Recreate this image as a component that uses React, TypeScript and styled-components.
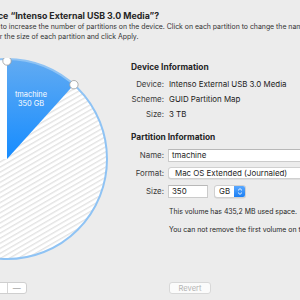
import styled, { createGlobalStyle } from 'styled-components';

const GlobalStyle = createGlobalStyle`
  html, body {
    margin: 0;
    padding: 0;
    background: #ececec;
  }
  #root {
    width: 300px;
    height: 300px;
    overflow: hidden;
  }
`;

const Window = styled.div`
  width: 420px;
  height: 300px;
  margin-left: -100px;
  padding-top: 10px;
  box-sizing: border-box;
  background: #ececec;
  font-family: Inter, 'Liberation Sans', sans-serif;
  color: #262626;
`;

const Header = styled.div`
  padding-left: 41px;
  white-space: nowrap;
`;

const Title = styled.div`
  font-size: 8.8px;
  line-height: 11px;
  font-weight: 700;
`;

const Description = styled.div`
  margin-top: 1px;
  font-size: 6.9px;
  line-height: 9.5px;
  color: #333;
`;

const DescriptionLine = styled.div<{ $indent: number }>`
  padding-left: ${(p) => p.$indent}px;
`;

const Body = styled.div`
  display: flex;
  margin-top: 17px;
`;

const LeftColumn = styled.div`
  flex: 0 0 231px;
  padding-left: 6px;
  box-sizing: border-box;
  display: flex;
  flex-direction: column;
`;

const SegmentGroup = styled.div`
  display: flex;
  margin-top: 22px;
  margin-left: 81px;
  width: 40px;
  height: 12px;
  background: #fff;
  border: 1px solid #cfcfcf;
  border-radius: 3px;
  box-sizing: border-box;
`;

const Segment = styled.div<{ $divider?: boolean }>`
  flex: 1;
  display: flex;
  align-items: center;
  justify-content: center;
  font-size: 8px;
  color: #9a9a9a;
  border-left: ${(p) => (p.$divider ? '1px solid #d6d6d6' : 'none')};
`;

const RightColumn = styled.div`
  flex: 0 0 auto;
  padding-top: 4px;
  display: flex;
  flex-direction: column;
`;

const SectionTitle = styled.div<{ $gap?: number }>`
  font-size: 8.4px;
  line-height: 11px;
  font-weight: 700;
  color: #262626;
  margin-top: ${(p) => p.$gap ?? 0}px;
`;

const InfoGrid = styled.div`
  display: grid;
  grid-template-columns: 33px auto;
  column-gap: 5px;
  grid-auto-rows: 15px;
  margin-top: 3px;
  font-size: 7.9px;
  align-items: center;
  white-space: nowrap;
`;

const Label = styled.div`
  text-align: right;
  color: #3a3a3a;
`;

const Value = styled.div`
  color: #222;
`;

const FormGrid = styled.div`
  display: grid;
  grid-template-columns: 33px auto;
  column-gap: 4px;
  row-gap: 5px;
  grid-auto-rows: 13px;
  margin-top: 5.5px;
  font-size: 7.9px;
  align-items: center;
  white-space: nowrap;
`;

const TextField = styled.div<{ $width: number }>`
  width: ${(p) => p.$width}px;
  height: 13px;
  box-sizing: border-box;
  background: #fff;
  border: 1px solid #cbcbcb;
  border-top-color: #b8b8b8;
  padding-left: 3px;
  display: flex;
  align-items: center;
  color: #1e1e1e;
`;

const Popup = styled.div<{ $width: number }>`
  width: ${(p) => p.$width}px;
  height: 12.5px;
  box-sizing: border-box;
  background: #fff;
  border: 1px solid #d0d0d0;
  border-radius: 3px;
  box-shadow: 0 0.5px 0.5px rgba(0, 0, 0, 0.12);
  display: flex;
  align-items: center;
  padding-left: 6px;
  color: #1e1e1e;
  overflow: hidden;
`;

const SizeRow = styled.div`
  display: flex;
  align-items: center;
  gap: 6px;
`;

const UnitPopup = styled.div`
  width: 32px;
  height: 13px;
  box-sizing: border-box;
  background: #fff;
  border: 1px solid #d0d0d0;
  border-radius: 3px;
  box-shadow: 0 0.5px 0.5px rgba(0, 0, 0, 0.12);
  display: flex;
  align-items: center;
  overflow: hidden;
`;

const UnitText = styled.div`
  flex: 1;
  padding-left: 4px;
  color: #1e1e1e;
`;

const Stepper = styled.div`
  width: 11px;
  height: 100%;
  background: linear-gradient(#5aa8ff, #1a7ff4);
  display: flex;
  align-items: center;
  justify-content: center;
`;

const Note = styled.div<{ $gap: number }>`
  margin-top: ${(p) => p.$gap}px;
  margin-left: 38px;
  font-size: 6.9px;
  line-height: 9px;
  color: #262626;
  white-space: nowrap;
`;

const PushButton = styled.div`
  margin-top: 48px;
  margin-left: 38px;
  width: 42px;
  height: 12px;
  box-sizing: border-box;
  background: #fbfbfb;
  border: 1px solid #d8d8d8;
  border-radius: 3px;
  display: flex;
  align-items: center;
  justify-content: center;
  font-size: 7.6px;
  color: #b4b4b4;
`;

const polar = (deg: number, r = 100) => {
  const a = (deg * Math.PI) / 180;
  return [101 + r * Math.sin(a), 101 - r * Math.cos(a)];
};

const wedge = (from: number, to: number) => {
  const [x1, y1] = polar(from);
  const [x2, y2] = polar(to);
  const large = to - from > 180 ? 1 : 0;
  return `M101 101 L${x1} ${y1} A100 100 0 ${large} 1 ${x2} ${y2} Z`;
};

const PieChart = () => {
  const [hx, hy] = polar(42);
  return (
    <svg width="202" height="202" viewBox="0 0 202 202">
      <defs>
        <pattern id="hatch" width="4.4" height="4.4" patternUnits="userSpaceOnUse" patternTransform="rotate(-30)">
          <rect width="4.4" height="4.4" fill="#fff" />
          <line x1="0" y1="0.7" x2="4.4" y2="0.7" stroke="#e2e2e2" strokeWidth="1.3" />
        </pattern>
        <linearGradient id="blue" x1="0" y1="0" x2="0" y2="1">
          <stop offset="0" stopColor="#62abf2" />
          <stop offset="1" stopColor="#168cff" />
        </linearGradient>
      </defs>
      <circle cx="101" cy="101" r="100" fill="url(#hatch)" />
      <path d={wedge(270, 360)} fill="#fff" />
      <path d={wedge(0, 42)} fill="url(#blue)" />
      <circle cx="101" cy="101" r="100" fill="none" stroke="#8fc3f4" strokeWidth="2" />
      <text x="125" y="38.5" fill="#fff" fontSize="7.4" textAnchor="middle" fontFamily="Inter, sans-serif">
        tmachine
      </text>
      <text x="125" y="48" fill="#fff" fontSize="7.4" textAnchor="middle" fontFamily="Inter, sans-serif">
        350 GB
      </text>
      <circle cx="101" cy="3" r="4.2" fill="#fff" stroke="#9c9c9c" strokeWidth="0.8" />
      <circle cx={hx} cy={hy} r="4.2" fill="#fff" stroke="#9c9c9c" strokeWidth="0.8" />
    </svg>
  );
};

const StepperIcon = () => (
  <svg width="6" height="9" viewBox="0 0 6 9">
    <path d="M1 3.4 L3 1.6 L5 3.4 M1 5.6 L3 7.4 L5 5.6" fill="none" stroke="#fff" strokeWidth="0.9" />
  </svg>
);

export default function App() {
  return (
    <>
      <GlobalStyle />
      <Window>
        <Header>
          <Title>Partition device “Intenso External USB 3.0 Media”?</Title>
          <Description>
            <DescriptionLine $indent={35}>
              Click + to increase the number of partitions on the device. Click on each partition to change the name
            </DescriptionLine>
            <DescriptionLine $indent={40}>and/or the size of each partition and click Apply.</DescriptionLine>
          </Description>
        </Header>
        <Body>
          <LeftColumn>
            <PieChart />
            <SegmentGroup>
              <Segment>+</Segment>
              <Segment $divider>—</Segment>
            </SegmentGroup>
          </LeftColumn>
          <RightColumn>
            <SectionTitle>Device Information</SectionTitle>
            <InfoGrid>
              <Label>Device:</Label>
              <Value>Intenso External USB 3.0 Media</Value>
              <Label>Scheme:</Label>
              <Value>GUID Partition Map</Value>
              <Label>Size:</Label>
              <Value>3 TB</Value>
            </InfoGrid>
            <SectionTitle $gap={11}>Partition Information</SectionTitle>
            <FormGrid>
              <Label>Name:</Label>
              <TextField $width={150}>tmachine</TextField>
              <Label>Format:</Label>
              <Popup $width={150}>Mac OS Extended (Journaled)</Popup>
              <Label>Size:</Label>
              <SizeRow>
                <TextField $width={40}>350</TextField>
                <UnitPopup>
                  <UnitText>GB</UnitText>
                  <Stepper>
                    <StepperIcon />
                  </Stepper>
                </UnitPopup>
              </SizeRow>
            </FormGrid>
            <Note $gap={9.5}>This volume has 435,2 MB used space.</Note>
            <Note $gap={9}>You can not remove the first volume on this device.</Note>
            <PushButton>Revert</PushButton>
          </RightColumn>
        </Body>
      </Window>
    </>
  );
}
